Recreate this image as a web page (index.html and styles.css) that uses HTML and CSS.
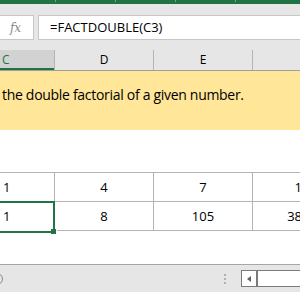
FILE: index.html
```html
<!DOCTYPE html>
<html lang="en">
<head>
    <meta charset="UTF-8">
    <title>FACTDOUBLE</title>
    <link rel="stylesheet" href="styles.css">
</head>
<body>
    <div class="window">
        <div class="ribbon">
            <span class="tick"></span><span class="tick"></span><span class="tick"></span><span class="tick"></span>
        </div>

        <div class="formula-row">
            <div class="fx-box"><span class="fx">fx</span></div>
            <div class="formula-input">=FACTDOUBLE(C3)</div>
        </div>

        <div class="col-headers">
            <div class="col-head active">C</div>
            <div class="col-head">D</div>
            <div class="col-head">E</div>
            <div class="col-head"></div>
        </div>

        <div class="sheet">
            <div class="note">the double factorial of a given number.</div>
            <div class="blank-row"></div>
            <div class="table">
                <div class="cell left">1</div>
                <div class="cell">4</div>
                <div class="cell">7</div>
                <div class="cell">10</div>
                <div class="cell left selected">1</div>
                <div class="cell">8</div>
                <div class="cell">105</div>
                <div class="cell">3840</div>
            </div>
        </div>

        <div class="status-bar">
            <span class="tab-nav"></span>
            <div class="status-right">
                <span class="grip"></span>
                <div class="hscroll">
                    <span class="arrow-btn"><span class="arrow"></span></span>
                    <span class="track"></span>
                </div>
            </div>
        </div>
    </div>
</body>
</html>
```

FILE: styles.css
```css
body {
    margin: 0;
    padding: 0;
    background-color: #ffffff;
    font-family: "Open Sans", Arial, sans-serif;
}
.window {
    width: 300px;
    height: 292px;
    overflow: hidden;
    display: flex;
    flex-direction: column;
}
.ribbon {
    height: 4px;
    background-color: #217346;
    display: flex;
    gap: 59px;
    padding-left: 55px;
}
.tick {
    width: 1px;
    height: 2px;
    background-color: #6fa585;
}
.formula-row {
    background-color: #e6e6e6;
    display: flex;
    gap: 4px;
    padding: 11px 0 10px 0;
    height: 25px;
}
.fx-box {
    width: 33px;
    height: 23px;
    background-color: #ffffff;
    border: 1px solid #c6c6c6;
    border-left: none;
    display: flex;
    align-items: center;
    justify-content: center;
}
.fx {
    font-family: "DejaVu Serif", "Liberation Serif", serif;
    font-style: italic;
    font-size: 12px;
    color: #8a8a8a;
    padding-right: 2px;
}
.formula-input {
    flex: 1;
    height: 23px;
    background-color: #ffffff;
    border: 1px solid #c6c6c6;
    border-right: none;
    padding-left: 11px;
    font-family: "Open Sans", Arial, sans-serif;
    font-size: 13px;
    line-height: 23px;
    color: #000000;
}
.col-headers {
    display: grid;
    grid-template-columns: 55px 99px 99px 99px;
    height: 20px;
    background-color: #e6e6e6;
    border-bottom: 1px solid #9f9f9f;
}
.col-head {
    font-size: 12px;
    line-height: 20px;
    text-align: center;
    color: #000000;
    border-right: 1px solid #b4b4b4;
}
.col-head.active {
    background-color: #d2d2d2;
    color: #217346;
    text-align: left;
    padding-left: 2px;
    box-shadow: inset 0 -2px 0 #217346;
}
.sheet {
    flex: 1;
    display: flex;
    flex-direction: column;
    font-family: "Open Sans", Arial, sans-serif;
}
.note {
    height: 59px;
    background-color: #ffe699;
    font-size: 14px;
    letter-spacing: -0.3px;
    line-height: 47px;
    padding-left: 2px;
    color: #000000;
}
.blank-row {
    height: 42px;
}
.table {
    display: grid;
    grid-template-columns: 55px 99px 99px 99px;
    grid-auto-rows: 29px;
    border-top: 1px solid #b4b4b4;
}
.cell {
    border-right: 1px solid #b4b4b4;
    border-bottom: 1px solid #b4b4b4;
    font-size: 13px;
    line-height: 28px;
    text-align: center;
    color: #000000;
}
.cell.left {
    text-align: left;
    padding-left: 3px;
}
.cell.selected {
    position: relative;
    margin-top: -1px;
    height: 28px;
    border-top: 2px solid #217346;
    border-right: 2px solid #217346;
    border-bottom: 2px solid #217346;
    line-height: 27px;
}
.cell.selected::after {
    content: "";
    position: absolute;
    right: -4px;
    bottom: -4px;
    width: 5px;
    height: 5px;
    background-color: #217346;
    border: 1px solid #ffffff;
    border-top: none;
    border-left: none;
}
.status-bar {
    margin-top: auto;
    height: 27px;
    background-color: #e6e6e6;
    border-top: 1px solid #a6a6a6;
    display: flex;
    align-items: center;
    justify-content: space-between;
}
.tab-nav {
    width: 10px;
    height: 10px;
    border: 1px solid #8a8a8a;
    border-radius: 50%;
    margin-left: -9px;
}
.status-right {
    display: flex;
    align-items: center;
    gap: 15px;
}
.grip {
    width: 2px;
    height: 10px;
    background: repeating-linear-gradient(#b0b0b0 0 2px, transparent 2px 4px);
}
.hscroll {
    display: flex;
    height: 15px;
    border: 1px solid #7a7a7a;
    border-right: none;
    background-color: #ffffff;
}
.arrow-btn {
    width: 14px;
    border-right: 2px solid #7a7a7a;
    display: flex;
    align-items: center;
    justify-content: center;
}
.arrow {
    width: 0;
    height: 0;
    border-top: 3px solid transparent;
    border-bottom: 3px solid transparent;
    border-right: 4px solid #606060;
}
.track {
    width: 42px;
}
```
